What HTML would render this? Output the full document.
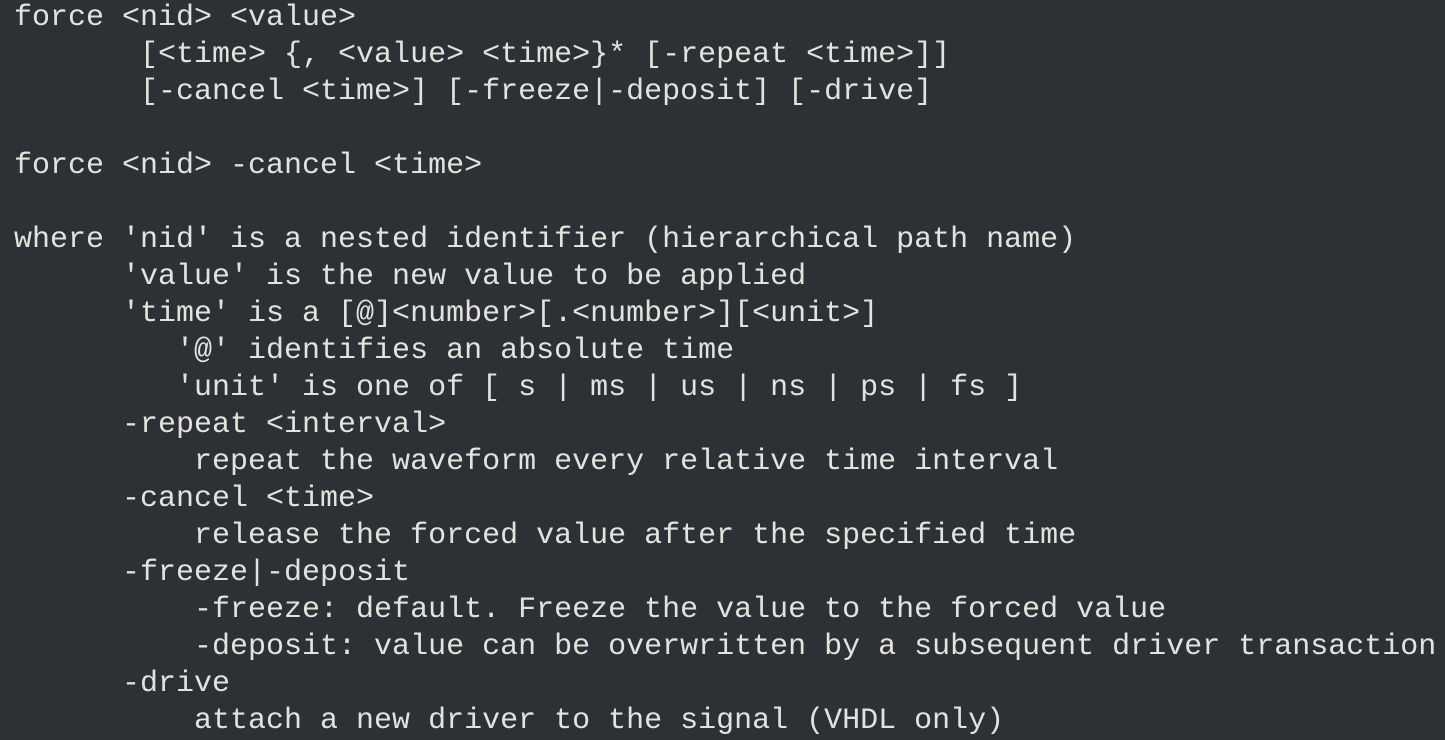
<!DOCTYPE html>
<html><head><meta charset="utf-8"><style>
html,body{margin:0;padding:0;background:#2d3135;width:1445px;height:735px;overflow:hidden}
pre{margin:0;position:absolute;left:14px;top:0;font-family:"Liberation Mono",monospace;font-size:30px;line-height:37px;color:#e2e2de;white-space:pre}
</style></head><body><pre>force &lt;nid&gt; &lt;value&gt;
       [&lt;time&gt; {, &lt;value&gt; &lt;time&gt;}* [-repeat &lt;time&gt;]]
       [-cancel &lt;time&gt;] [-freeze|-deposit] [-drive]

force &lt;nid&gt; -cancel &lt;time&gt;

where 'nid' is a nested identifier (hierarchical path name)
      'value' is the new value to be applied
      'time' is a [@]&lt;number&gt;[.&lt;number&gt;][&lt;unit&gt;]
         '@' identifies an absolute time
         'unit' is one of [ s | ms | us | ns | ps | fs ]
      -repeat &lt;interval&gt;
          repeat the waveform every relative time interval
      -cancel &lt;time&gt;
          release the forced value after the specified time
      -freeze|-deposit
          -freeze: default. Freeze the value to the forced value
          -deposit: value can be overwritten by a subsequent driver transaction
      -drive
          attach a new driver to the signal (VHDL only)</pre></body></html>
